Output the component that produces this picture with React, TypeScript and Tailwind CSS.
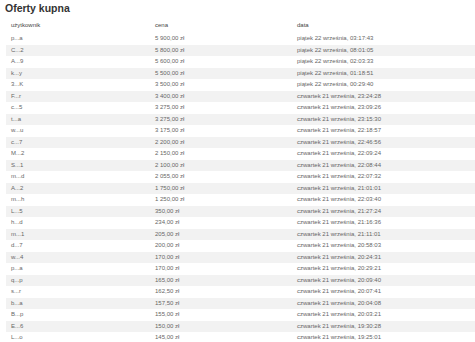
const rows: [string, string, string][] = [
  ["p...a", "5 900,00 zł", "piątek 22 września, 03:17:43"],
  ["C...2", "5 800,00 zł", "piątek 22 września, 08:01:05"],
  ["A...9", "5 600,00 zł", "piątek 22 września, 02:03:33"],
  ["k...y", "5 500,00 zł", "piątek 22 września, 01:18:51"],
  ["3...K", "3 500,00 zł", "piątek 22 września, 00:29:40"],
  ["F...r", "3 400,00 zł", "czwartek 21 września, 23:24:28"],
  ["c...5", "3 275,00 zł", "czwartek 21 września, 23:09:26"],
  ["t...a", "3 275,00 zł", "czwartek 21 września, 23:15:30"],
  ["w...u", "3 175,00 zł", "czwartek 21 września, 22:18:57"],
  ["c...7", "2 200,00 zł", "czwartek 21 września, 22:46:56"],
  ["M...2", "2 150,00 zł", "czwartek 21 września, 22:09:24"],
  ["S...1", "2 100,00 zł", "czwartek 21 września, 22:08:44"],
  ["m...d", "2 055,00 zł", "czwartek 21 września, 22:07:32"],
  ["A...2", "1 750,00 zł", "czwartek 21 września, 21:01:01"],
  ["m...h", "1 250,00 zł", "czwartek 21 września, 22:03:40"],
  ["L...5", "350,00 zł", "czwartek 21 września, 21:27:24"],
  ["h...d", "234,00 zł", "czwartek 21 września, 21:16:36"],
  ["m...1", "205,00 zł", "czwartek 21 września, 21:11:01"],
  ["d...7", "200,00 zł", "czwartek 21 września, 20:58:03"],
  ["w...4", "170,00 zł", "czwartek 21 września, 20:24:31"],
  ["p...a", "170,00 zł", "czwartek 21 września, 20:29:21"],
  ["q...p", "165,00 zł", "czwartek 21 września, 20:09:40"],
  ["s...r", "162,50 zł", "czwartek 21 września, 20:07:41"],
  ["b...a", "157,50 zł", "czwartek 21 września, 20:04:08"],
  ["B...p", "155,00 zł", "czwartek 21 września, 20:03:21"],
  ["E...6", "150,00 zł", "czwartek 21 września, 19:30:28"],
  ["L...o", "145,00 zł", "czwartek 21 września, 19:25:01"],
];

export default function App() {
  return (
    <div className="h-[342px] w-[475px] overflow-hidden bg-white pl-[6px] font-['Liberation_Sans',Arial,sans-serif]">
      <h1 className="-ml-[1px] pt-[2px] text-[10.5px] font-bold leading-[13px] text-[#333]">
        Oferty kupna
      </h1>
      <table className="mt-[3px] w-[469px] border-collapse text-[6px] text-[#666]">
        <thead>
          <tr className="h-[15px] text-[#444]">
            <th className="w-[144px] pl-[5px] text-left font-normal">użytkownik</th>
            <th className="w-[142px] pl-[5px] text-left font-normal">cena</th>
            <th className="pl-[5px] text-left font-normal">data</th>
          </tr>
        </thead>
        <tbody>
          {rows.map(([user, price, date], i) => (
            <tr key={i} className={`h-[11.5px] ${i % 2 === 1 ? "bg-[#f2f2f2]" : ""}`}>
              <td className="pl-[5px] leading-[11.5px]">{user}</td>
              <td className="pl-[5px] leading-[11.5px]">{price}</td>
              <td className="pl-[5px] leading-[11.5px]">{date}</td>
            </tr>
          ))}
        </tbody>
      </table>
    </div>
  );
}
